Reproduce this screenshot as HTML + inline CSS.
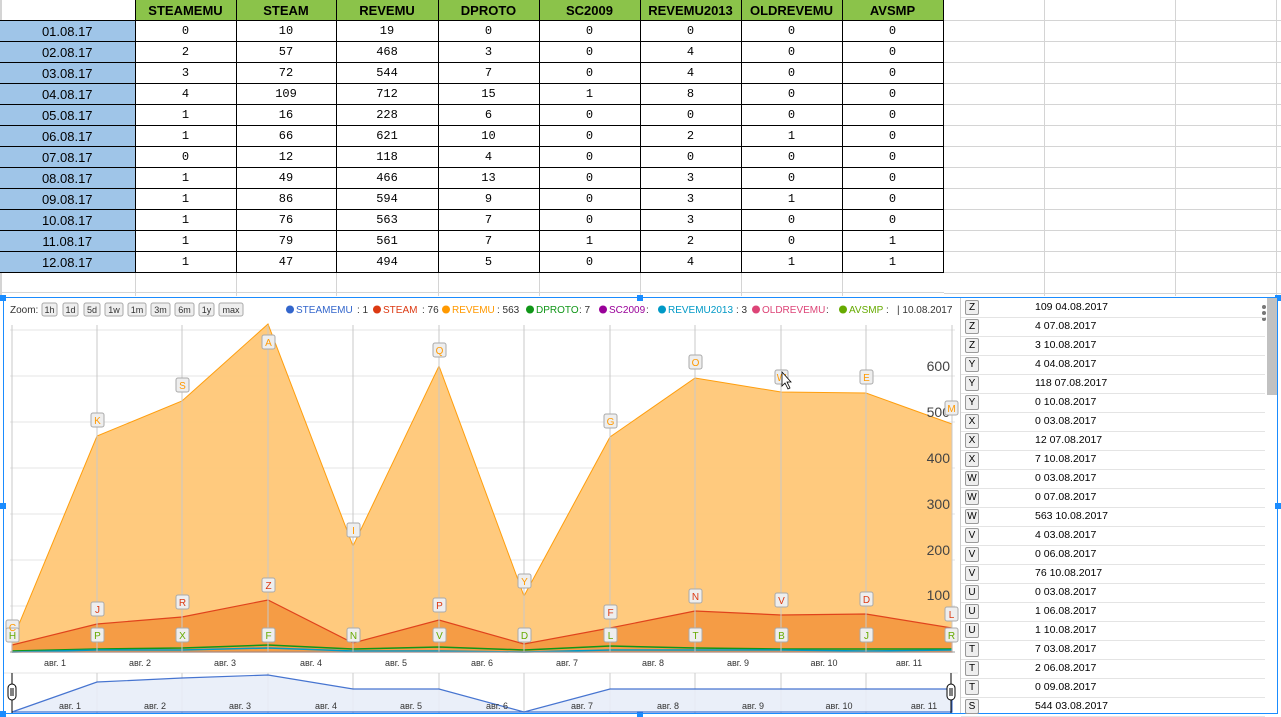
<!DOCTYPE html><html><head><meta charset="utf-8"><style>
body{margin:0;width:1281px;height:717px;overflow:hidden;background:#fff;font-family:"Liberation Sans",sans-serif;position:relative}
.a{position:absolute}
table{position:absolute;left:0;top:0;border-collapse:collapse}
td{height:20px;padding:0;text-align:center;font-size:13px;border:1px solid #000}
th{height:20px;padding:0;font-size:13px;background:#8bc34a;border:1px solid #000;border-top:none;font-weight:bold}
td.d{background:#9fc5e8;border-left:none}
td.n{font-family:"Liberation Mono",monospace;font-size:12px}
.li{position:absolute;left:961px;width:304px;height:19px;border-bottom:1px solid #e4e4e4;font-size:10.5px}
.li b{position:absolute;left:4px;top:2px;width:12px;height:13px;border:1px solid #999;border-radius:2px;background:#eee;font-weight:normal;font-size:10px;text-align:center;line-height:13px}
.li span{position:absolute;left:74px;top:3px}
</style></head><body>
<div class="a" style="left:1044px;top:0;width:1px;height:296px;background:#d4d4d4"></div>
<div class="a" style="left:1175px;top:0;width:1px;height:296px;background:#d4d4d4"></div>
<div class="a" style="left:1276px;top:0;width:1px;height:296px;background:#d4d4d4"></div>
<div class="a" style="left:0;top:0;width:2px;height:296px;background:#d4d4d4"></div>
<div class="a" style="left:944px;top:0;width:337px;height:294px;background:repeating-linear-gradient(to bottom,transparent 0,transparent 20px,#d4d4d4 20px,#d4d4d4 21px)"></div>
<div class="a" style="left:0;top:272px;width:944px;height:22px;background:repeating-linear-gradient(to bottom,transparent 0,transparent 20px,#d4d4d4 20px,#d4d4d4 21px)"></div>
<div class="a" style="left:135px;top:272px;width:1px;height:24px;background:#d4d4d4"></div>
<div class="a" style="left:236px;top:272px;width:1px;height:24px;background:#d4d4d4"></div>
<div class="a" style="left:336px;top:272px;width:1px;height:24px;background:#d4d4d4"></div>
<div class="a" style="left:438px;top:272px;width:1px;height:24px;background:#d4d4d4"></div>
<div class="a" style="left:539px;top:272px;width:1px;height:24px;background:#d4d4d4"></div>
<div class="a" style="left:640px;top:272px;width:1px;height:24px;background:#d4d4d4"></div>
<div class="a" style="left:741px;top:272px;width:1px;height:24px;background:#d4d4d4"></div>
<div class="a" style="left:842px;top:272px;width:1px;height:24px;background:#d4d4d4"></div>
<table>
<colgroup><col style="width:135px"><col style="width:101px"><col style="width:100px"><col style="width:102px"><col style="width:101px"><col style="width:101px"><col style="width:101px"><col style="width:101px"><col style="width:101px"></colgroup>
<tr><td style="border:none;border-right:1px solid #000"></td><th>STEAMEMU</th><th>STEAM</th><th>REVEMU</th><th>DPROTO</th><th>SC2009</th><th>REVEMU2013</th><th>OLDREVEMU</th><th>AVSMP</th></tr>
<tr><td class="d">01.08.17</td><td class="n">0</td><td class="n">10</td><td class="n">19</td><td class="n">0</td><td class="n">0</td><td class="n">0</td><td class="n">0</td><td class="n">0</td></tr>
<tr><td class="d">02.08.17</td><td class="n">2</td><td class="n">57</td><td class="n">468</td><td class="n">3</td><td class="n">0</td><td class="n">4</td><td class="n">0</td><td class="n">0</td></tr>
<tr><td class="d">03.08.17</td><td class="n">3</td><td class="n">72</td><td class="n">544</td><td class="n">7</td><td class="n">0</td><td class="n">4</td><td class="n">0</td><td class="n">0</td></tr>
<tr><td class="d">04.08.17</td><td class="n">4</td><td class="n">109</td><td class="n">712</td><td class="n">15</td><td class="n">1</td><td class="n">8</td><td class="n">0</td><td class="n">0</td></tr>
<tr><td class="d">05.08.17</td><td class="n">1</td><td class="n">16</td><td class="n">228</td><td class="n">6</td><td class="n">0</td><td class="n">0</td><td class="n">0</td><td class="n">0</td></tr>
<tr><td class="d">06.08.17</td><td class="n">1</td><td class="n">66</td><td class="n">621</td><td class="n">10</td><td class="n">0</td><td class="n">2</td><td class="n">1</td><td class="n">0</td></tr>
<tr><td class="d">07.08.17</td><td class="n">0</td><td class="n">12</td><td class="n">118</td><td class="n">4</td><td class="n">0</td><td class="n">0</td><td class="n">0</td><td class="n">0</td></tr>
<tr><td class="d">08.08.17</td><td class="n">1</td><td class="n">49</td><td class="n">466</td><td class="n">13</td><td class="n">0</td><td class="n">3</td><td class="n">0</td><td class="n">0</td></tr>
<tr><td class="d">09.08.17</td><td class="n">1</td><td class="n">86</td><td class="n">594</td><td class="n">9</td><td class="n">0</td><td class="n">3</td><td class="n">1</td><td class="n">0</td></tr>
<tr><td class="d">10.08.17</td><td class="n">1</td><td class="n">76</td><td class="n">563</td><td class="n">7</td><td class="n">0</td><td class="n">3</td><td class="n">0</td><td class="n">0</td></tr>
<tr><td class="d">11.08.17</td><td class="n">1</td><td class="n">79</td><td class="n">561</td><td class="n">7</td><td class="n">1</td><td class="n">2</td><td class="n">0</td><td class="n">1</td></tr>
<tr><td class="d">12.08.17</td><td class="n">1</td><td class="n">47</td><td class="n">494</td><td class="n">5</td><td class="n">0</td><td class="n">4</td><td class="n">1</td><td class="n">1</td></tr>
</table>

<div class="a" style="left:3px;top:297px;width:1275px;height:417px;background:#fff;border:1px solid #1a8cff;box-sizing:border-box"></div>
<div class="a" style="left:0;top:295px;width:6px;height:6px;background:#1a8cff"></div>
<div class="a" style="left:637px;top:295px;width:6px;height:6px;background:#1a8cff"></div>
<div class="a" style="left:1275px;top:295px;width:6px;height:6px;background:#1a8cff"></div>
<div class="a" style="left:0;top:503px;width:6px;height:6px;background:#1a8cff"></div>
<div class="a" style="left:1275px;top:503px;width:6px;height:6px;background:#1a8cff"></div>
<div class="a" style="left:0;top:711px;width:6px;height:6px;background:#1a8cff"></div>
<div class="a" style="left:637px;top:711px;width:6px;height:6px;background:#1a8cff"></div>
<div class="a" style="left:960px;top:298px;width:1px;height:415px;background:#ccc"></div>

<svg class="a" style="left:0;top:0" width="961" height="717" font-family="Liberation Sans,sans-serif">
<g font-size="10" fill="#333"><text x="10" y="313">Zoom:</text></g>
<g font-size="9" text-anchor="middle" fill="#333">
<rect x="42" y="303" width="15" height="13" fill="#eee" stroke="#aaa" rx="2"/><text x="49.5" y="313">1h</text>
<rect x="63" y="303" width="15" height="13" fill="#eee" stroke="#aaa" rx="2"/><text x="70.5" y="313">1d</text>
<rect x="84" y="303" width="16" height="13" fill="#eee" stroke="#aaa" rx="2"/><text x="92" y="313">5d</text>
<rect x="105" y="303" width="18" height="13" fill="#eee" stroke="#aaa" rx="2"/><text x="114" y="313">1w</text>
<rect x="128" y="303" width="18" height="13" fill="#eee" stroke="#aaa" rx="2"/><text x="137" y="313">1m</text>
<rect x="151" y="303" width="19" height="13" fill="#eee" stroke="#aaa" rx="2"/><text x="160.5" y="313">3m</text>
<rect x="175" y="303" width="19" height="13" fill="#eee" stroke="#aaa" rx="2"/><text x="184.5" y="313">6m</text>
<rect x="199" y="303" width="15" height="13" fill="#eee" stroke="#aaa" rx="2"/><text x="206.5" y="313">1y</text>
<rect x="219" y="303" width="24" height="13" fill="#eee" stroke="#aaa" rx="2"/><text x="231" y="313">max</text>
</g>
<g font-size="10">
<circle cx="290" cy="309.5" r="4" fill="#3366cc"/><text x="296" y="313" fill="#3366cc">STEAMEMU</text><text x="357" y="313" fill="#333">: 1</text>
<circle cx="377" cy="309.5" r="4" fill="#dc3912"/><text x="383" y="313" fill="#dc3912">STEAM</text><text x="422" y="313" fill="#333">: 76</text>
<circle cx="446" cy="309.5" r="4" fill="#ff9900"/><text x="452" y="313" fill="#ff9900">REVEMU</text><text x="497" y="313" fill="#333">: 563</text>
<circle cx="530" cy="309.5" r="4" fill="#109618"/><text x="536" y="313" fill="#109618">DPROTO</text><text x="579" y="313" fill="#333">: 7</text>
<circle cx="603" cy="309.5" r="4" fill="#990099"/><text x="609" y="313" fill="#990099">SC2009</text><text x="646" y="313" fill="#333">:</text>
<circle cx="662" cy="309.5" r="4" fill="#0099c6"/><text x="668" y="313" fill="#0099c6">REVEMU2013</text><text x="736" y="313" fill="#333">: 3</text>
<circle cx="756" cy="309.5" r="4" fill="#dd4477"/><text x="762" y="313" fill="#dd4477">OLDREVEMU</text><text x="826" y="313" fill="#333">:</text>
<circle cx="843" cy="309.5" r="4" fill="#66aa00"/><text x="849" y="313" fill="#66aa00">AVSMP</text><text x="886" y="313" fill="#333">:</text>
<text x="897" y="313" fill="#333">| 10.08.2017</text>
</g>
<g stroke="#e4e4e4"><line x1="10" y1="330" x2="955" y2="330"/><line x1="10" y1="376" x2="955" y2="376"/><line x1="10" y1="422" x2="955" y2="422"/><line x1="10" y1="468" x2="955" y2="468"/><line x1="10" y1="514" x2="955" y2="514"/><line x1="10" y1="560" x2="955" y2="560"/><line x1="10" y1="606" x2="955" y2="606"/></g>
<polygon fill="#ffc878" opacity="0.95" stroke="#ff9900" stroke-width="1" points="12,652 12,641 97,436 182,401 268,324 353,546 439,366 524,596 610,437 695,378 781,392 866,393 952,424 952,652"/>
<polygon fill="#f59c45" stroke="#e0431c" stroke-width="1.2" points="12,652 12,645 97,624 182,617 268,600 353,643 439,620 524,644 610,628 695,611 781,615 866,614 952,628 952,652"/>
<polyline fill="none" stroke="#109618" stroke-width="1.5" points="12,651 97,649 182,648 268,645 353,649 439,647 524,650 610,646 695,648 781,649 866,649 952,649"/>
<polyline fill="none" stroke="#0099c6" stroke-width="1.5" points="12,652 97,650 182,650 268,648 353,651 439,651 524,652 610,650 695,650 781,650 866,651 952,650"/>
<g stroke="#c8c8c8"><line x1="12" y1="325" x2="12" y2="652"/><line x1="97" y1="325" x2="97" y2="652"/><line x1="182" y1="325" x2="182" y2="652"/><line x1="268" y1="325" x2="268" y2="652"/><line x1="353" y1="325" x2="353" y2="652"/><line x1="439" y1="325" x2="439" y2="652"/><line x1="524" y1="325" x2="524" y2="652"/><line x1="610" y1="325" x2="610" y2="652"/><line x1="695" y1="325" x2="695" y2="652"/><line x1="781" y1="325" x2="781" y2="652"/><line x1="866" y1="325" x2="866" y2="652"/><line x1="952" y1="325" x2="952" y2="652"/></g>
<line x1="10" y1="652" x2="955" y2="652" stroke="#999"/>
<g font-size="14" fill="#444" text-anchor="end"><text x="950" y="371">600</text><text x="950" y="417">500</text><text x="950" y="463">400</text><text x="950" y="509">300</text><text x="950" y="555">200</text><text x="950" y="600">100</text></g>
<g font-size="10" text-anchor="middle">
<g fill="#eee" stroke="#aaa"><rect x="6" y="620" width="13" height="14" rx="2"/><rect x="91" y="413" width="13" height="14" rx="2"/><rect x="176" y="378" width="13" height="14" rx="2"/><rect x="262" y="335" width="13" height="14" rx="2"/><rect x="347" y="523" width="13" height="14" rx="2"/><rect x="433" y="343" width="13" height="14" rx="2"/><rect x="518" y="574" width="13" height="14" rx="2"/><rect x="604" y="414" width="13" height="14" rx="2"/><rect x="689" y="355" width="13" height="14" rx="2"/><rect x="775" y="370" width="13" height="14" rx="2"/><rect x="860" y="370" width="13" height="14" rx="2"/><rect x="945" y="401" width="13" height="14" rx="2"/>
<rect x="91" y="602" width="13" height="14" rx="2"/><rect x="176" y="595" width="13" height="14" rx="2"/><rect x="262" y="578" width="13" height="14" rx="2"/><rect x="433" y="598" width="13" height="14" rx="2"/><rect x="604" y="605" width="13" height="14" rx="2"/><rect x="689" y="589" width="13" height="14" rx="2"/><rect x="775" y="593" width="13" height="14" rx="2"/><rect x="860" y="592" width="13" height="14" rx="2"/><rect x="945" y="607" width="13" height="14" rx="2"/>
<rect x="6" y="628" width="13" height="14" rx="2"/><rect x="91" y="628" width="13" height="14" rx="2"/><rect x="176" y="628" width="13" height="14" rx="2"/><rect x="262" y="628" width="13" height="14" rx="2"/><rect x="347" y="628" width="13" height="14" rx="2"/><rect x="433" y="628" width="13" height="14" rx="2"/><rect x="518" y="628" width="13" height="14" rx="2"/><rect x="604" y="628" width="13" height="14" rx="2"/><rect x="689" y="628" width="13" height="14" rx="2"/><rect x="775" y="628" width="13" height="14" rx="2"/><rect x="860" y="628" width="13" height="14" rx="2"/><rect x="945" y="628" width="13" height="14" rx="2"/></g>
<g fill="#ff9900"><text x="12.5" y="631">C</text><text x="97.5" y="424">K</text><text x="182.5" y="389">S</text><text x="268.5" y="346">A</text><text x="353.5" y="534">I</text><text x="439.5" y="354">Q</text><text x="524.5" y="585">Y</text><text x="610.5" y="425">G</text><text x="695.5" y="366">O</text><text x="781.5" y="381">W</text><text x="866.5" y="381">E</text><text x="951.5" y="412">M</text></g>
<g fill="#dc3912"><text x="97.5" y="613">J</text><text x="182.5" y="606">R</text><text x="268.5" y="589">Z</text><text x="439.5" y="609">P</text><text x="610.5" y="616">F</text><text x="695.5" y="600">N</text><text x="781.5" y="604">V</text><text x="866.5" y="603">D</text><text x="951.5" y="618">L</text></g>
<g fill="#66aa00"><text x="12.5" y="639">H</text><text x="97.5" y="639">P</text><text x="182.5" y="639">X</text><text x="268.5" y="639">F</text><text x="353.5" y="639">N</text><text x="439.5" y="639">V</text><text x="524.5" y="639">D</text><text x="610.5" y="639">L</text><text x="695.5" y="639">T</text><text x="781.5" y="639">B</text><text x="866.5" y="639">J</text><text x="951.5" y="639">R</text></g>
</g>
<g font-size="9" fill="#333" text-anchor="middle"><text x="55" y="666">авг. 1</text><text x="140" y="666">авг. 2</text><text x="225" y="666">авг. 3</text><text x="311" y="666">авг. 4</text><text x="396" y="666">авг. 5</text><text x="482" y="666">авг. 6</text><text x="567" y="666">авг. 7</text><text x="653" y="666">авг. 8</text><text x="738" y="666">авг. 9</text><text x="824" y="666">авг. 10</text><text x="909" y="666">авг. 11</text></g>
<line x1="4" y1="673" x2="958" y2="673" stroke="#e4e4e4"/>
<g stroke="#ccc"><line x1="97" y1="673" x2="97" y2="713"/><line x1="182" y1="673" x2="182" y2="713"/><line x1="268" y1="673" x2="268" y2="713"/><line x1="353" y1="673" x2="353" y2="713"/><line x1="439" y1="673" x2="439" y2="713"/><line x1="524" y1="673" x2="524" y2="713"/><line x1="610" y1="673" x2="610" y2="713"/><line x1="695" y1="673" x2="695" y2="713"/><line x1="781" y1="673" x2="781" y2="713"/><line x1="866" y1="673" x2="866" y2="713"/></g>
<polygon fill="#e8eef9" opacity="0.9" stroke="#3366cc" stroke-width="1.2" points="12,712 97,682 182,678 268,675 353,689 439,689 524,712 610,689 695,689 781,689 866,689 952,689 952,712"/>
<g font-size="9" fill="#333" text-anchor="middle"><text x="70" y="709">авг. 1</text><text x="155" y="709">авг. 2</text><text x="240" y="709">авг. 3</text><text x="326" y="709">авг. 4</text><text x="411" y="709">авг. 5</text><text x="497" y="709">авг. 6</text><text x="582" y="709">авг. 7</text><text x="668" y="709">авг. 8</text><text x="753" y="709">авг. 9</text><text x="839" y="709">авг. 10</text><text x="924" y="709">авг. 11</text></g>
<line x1="12" y1="673" x2="12" y2="713" stroke="#000"/><rect x="8" y="684" width="8" height="16" rx="4" fill="#fff" stroke="#000"/><line x1="11" y1="688" x2="11" y2="696" stroke="#000"/><line x1="13" y1="688" x2="13" y2="696" stroke="#000"/>
<line x1="951" y1="673" x2="951" y2="713" stroke="#000"/><rect x="947" y="684" width="8" height="16" rx="4" fill="#fff" stroke="#000"/><line x1="950" y1="688" x2="950" y2="696" stroke="#000"/><line x1="952" y1="688" x2="952" y2="696" stroke="#000"/>
<path d="M782,372 l0,14 l3,-3 l3,6 l2,-1 l-3,-6 l4,0z" fill="#fff" stroke="#000" stroke-width="0.8"/>
</svg>

<div class="a" style="left:1267px;top:298px;width:10px;height:97px;background:#c1c1c1"></div>
<div class="a" style="left:1262px;top:305px;width:4px;height:4px;border-radius:2px;background:#777"></div>
<div class="a" style="left:1262px;top:311px;width:4px;height:4px;border-radius:2px;background:#777"></div>
<div class="a" style="left:1262px;top:317px;width:4px;height:4px;border-radius:2px;background:#777"></div>
<div class="li" style="top:298px"><b>Z</b><span>109 04.08.2017</span></div>
<div class="li" style="top:317px"><b>Z</b><span>4 07.08.2017</span></div>
<div class="li" style="top:336px"><b>Z</b><span>3 10.08.2017</span></div>
<div class="li" style="top:355px"><b>Y</b><span>4 04.08.2017</span></div>
<div class="li" style="top:374px"><b>Y</b><span>118 07.08.2017</span></div>
<div class="li" style="top:393px"><b>Y</b><span>0 10.08.2017</span></div>
<div class="li" style="top:412px"><b>X</b><span>0 03.08.2017</span></div>
<div class="li" style="top:431px"><b>X</b><span>12 07.08.2017</span></div>
<div class="li" style="top:450px"><b>X</b><span>7 10.08.2017</span></div>
<div class="li" style="top:469px"><b>W</b><span>0 03.08.2017</span></div>
<div class="li" style="top:488px"><b>W</b><span>0 07.08.2017</span></div>
<div class="li" style="top:507px"><b>W</b><span>563 10.08.2017</span></div>
<div class="li" style="top:526px"><b>V</b><span>4 03.08.2017</span></div>
<div class="li" style="top:545px"><b>V</b><span>0 06.08.2017</span></div>
<div class="li" style="top:564px"><b>V</b><span>76 10.08.2017</span></div>
<div class="li" style="top:583px"><b>U</b><span>0 03.08.2017</span></div>
<div class="li" style="top:602px"><b>U</b><span>1 06.08.2017</span></div>
<div class="li" style="top:621px"><b>U</b><span>1 10.08.2017</span></div>
<div class="li" style="top:640px"><b>T</b><span>7 03.08.2017</span></div>
<div class="li" style="top:659px"><b>T</b><span>2 06.08.2017</span></div>
<div class="li" style="top:678px"><b>T</b><span>0 09.08.2017</span></div>
<div class="li" style="top:697px"><b>S</b><span>544 03.08.2017</span></div>
</body></html>
